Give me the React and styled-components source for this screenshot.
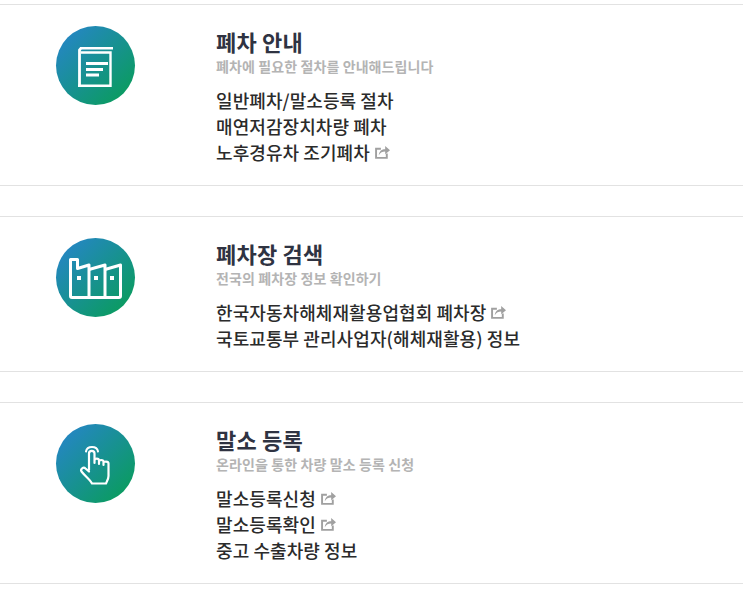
import styled, { createGlobalStyle } from "styled-components";

const GlobalStyle = createGlobalStyle`
  html, body { margin:0; padding:0; background:#fff; }
  body { font-family:"Noto Sans CJK KR","Noto Sans",sans-serif; }
`;

const SECTIONS = [
  {
    title: "폐차 안내",
    sub: "폐차에 필요한 절차를 안내해드립니다",
    icon: "book",
    links: [
      { label: "일반폐차/말소등록 절차" },
      { label: "매연저감장치차량 폐차" },
      { label: "노후경유차 조기폐차", ext: true },
    ],
  },
  {
    title: "폐차장 검색",
    sub: "전국의 폐차장 정보 확인하기",
    icon: "factory",
    links: [
      { label: "한국자동차해체재활용업협회 폐차장", ext: true },
      { label: "국토교통부 관리사업자(해체재활용) 정보" },
    ],
  },
  {
    title: "말소 등록",
    sub: "온라인을 통한 차량 말소 등록 신청",
    icon: "hand",
    links: [
      { label: "말소등록신청", ext: true },
      { label: "말소등록확인", ext: true },
      { label: "중고 수출차량 정보" },
    ],
  },
];

function BookIcon() {
  return (
    <IconSvg $top={3} width="35" height="40" viewBox="0 0 35 40" fill="none" stroke="#fff">
      <path d="M1.500 39V3L3 1.200H35" strokeWidth="2.800" />
      <path d="M3 5.500H32.500V38.800H0" strokeWidth="2.400" />
      <path d="M8 16.500H30M8 22.500H25M8 28H21" strokeWidth="2.800" />
    </IconSvg>
  );
}

function FactoryIcon() {
  return (
    <IconSvg $top={2} width="53" height="41" viewBox="0 0 53 41" fill="none" stroke="#fff" strokeLinejoin="round">
      <path d="M1.500 38V1.500H8.500V10.500L20 7V39.500" strokeWidth="3" />
      <path d="M20 11.500L36 7V39.500" strokeWidth="3" />
      <path d="M36 11.500L51.500 7V38Q51.500 39.500 50 39.500H3Q1.500 39.500 1.500 38" strokeWidth="3" />
      <path d="M8 18h4v4h-4zM25 18h4v4h-4zM41 18h4v4h-4z" fill="#fff" stroke="none" />
    </IconSvg>
  );
}

function HandIcon() {
  return (
    <IconSvg $top={2} width="34" height="42" viewBox="0 0 34 42" fill="none" stroke="#fff" strokeLinecap="round" strokeLinejoin="round">
      <path d="M7 7.500C8 1.500 18 1.500 19 7.500" strokeWidth="2" />
      <path
        d="M10 26V9.500C10 6 15.500 6 15.500 9.500V19M15.500 19V16.500C15.500 14 20 14 20 16.500V20M20 20V17.500C20 15.500 24.500 15.500 24.500 17.500V21M24.500 21V19C24.500 17 29.500 17 29.500 19.500V32C29.500 35 28 37 27 39.500H13C11 35.500 6 32 2.500 27.500C1 25 4.500 22.500 6.500 24.500L10 27.500"
        strokeWidth="2.200"
      />
    </IconSvg>
  );
}

const ICONS = { book: BookIcon, factory: FactoryIcon, hand: HandIcon };

function ExtIcon() {
  return (
    <ExtSvg width="15" height="14" viewBox="0 0 14 13" fill="none" stroke="#a0a0a0" strokeWidth="1.800">
      <path d="M11 8V12H1V3.500H5.500" />
      <path d="M3.500 9.500C4 5.500 6.500 4 9.500 4V1L14 4.800L9.500 8.500V6C7 6 5 7 3.500 9.500Z" fill="#a0a0a0" stroke="none" />
    </ExtSvg>
  );
}

export default function App() {
  return (
    <Page>
      <GlobalStyle />
      {SECTIONS.map((s) => {
        const Icon = ICONS[s.icon];
        return (
          <Section key={s.title}>
            <Circle>
              <Icon />
            </Circle>
            <Body>
              <Title>{s.title}</Title>
              <Sub>{s.sub}</Sub>
              <Links>
                {s.links.map((l) => (
                  <LinkRow key={l.label}>
                    {l.label}
                    {l.ext && <ExtIcon />}
                  </LinkRow>
                ))}
              </Links>
            </Body>
          </Section>
        );
      })}
    </Page>
  );
}

const Page = styled.div`
  width:743px;
  padding-top:4px;
  display:flex;
  flex-direction:column;
  gap:30px;
`;

const Section = styled.section`
  display:flex;
  align-items:flex-start;
  padding:21px 0 20px 56px;
  border-top:1px solid #e2e2e2;
  border-bottom:1px solid #e2e2e2;
`;

const Circle = styled.div`
  flex:none;
  width:79px;
  height:79px;
  border-radius:50%;
  display:flex;
  align-items:center;
  justify-content:center;
  background:linear-gradient(135deg,#2586c4 10%,#0a9c5e 90%);
`;

const IconSvg = styled.svg`
  margin-top:${(p) => p.$top}px;
`;

const Body = styled.div`
  margin:-1px 0 0 81px;
  display:flex;
  flex-direction:column;
`;

const Title = styled.h3`
  margin:0;
  font-size:22px;
  line-height:32px;
  font-weight:700;
  letter-spacing:.2px;
  color:#2f3342;
`;

const Sub = styled.p`
  margin:0;
  font-size:14px;
  line-height:18px;
  font-weight:700;
  letter-spacing:.1px;
  color:#b4b4b4;
`;

const Links = styled.ul`
  margin:12px 0 0;
  padding:0;
  list-style:none;
`;

const LinkRow = styled.li`
  display:flex;
  align-items:center;
  font-size:18px;
  line-height:26px;
  font-weight:500;
  letter-spacing:.08px;
  color:#2b2b2b;
`;

const ExtSvg = styled.svg`
  margin-left:5px;
`;
